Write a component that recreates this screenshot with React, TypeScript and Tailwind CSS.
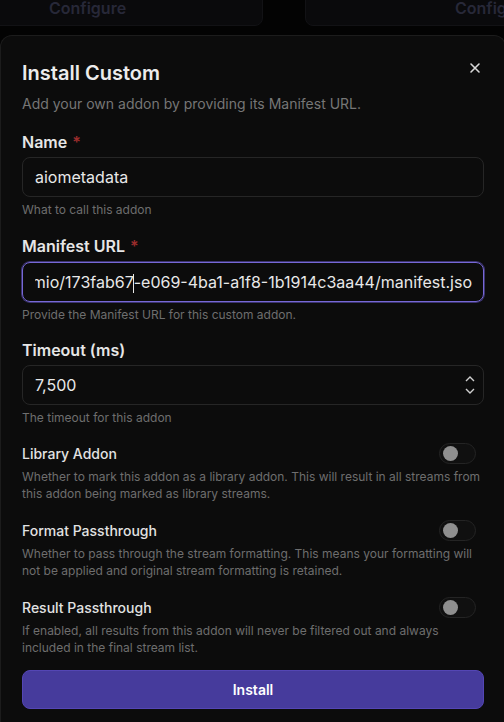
import React from 'react';

const Toggle = () => (
  <div className="w-[37px] h-[21px] rounded-full border border-[#242424] bg-[#101010] flex items-center px-[3px] shrink-0">
    <div className="w-[15px] h-[15px] rounded-full bg-[#8f8f8f]" />
  </div>
);

const SwitchRow = ({ title, desc, mt }: { title: string; desc: string; mt: string }) => (
  <div className={mt}>
    <div className="flex items-center justify-between pr-[8px]">
      <span className="text-[14px] leading-[20px] font-medium text-[#e2e2e2]">{title}</span>
      <Toggle />
    </div>
    <p className="mt-[4px] text-[12px] leading-[17px] text-[#6e6e6e]">{desc}</p>
  </div>
);

const Label = ({ text, required }: { text: string; required?: boolean }) => (
  <div className="text-[16px] leading-[24px] font-semibold text-[#e6e6e6]">
    {text}
    {required && <span className="ml-[5px] text-[#9b2c2c]">*</span>}
  </div>
);

const App: React.FC = () => {
  return (
    <div className="w-[504px] h-[722px] overflow-hidden bg-[#030303] font-['Inter',sans-serif]">
      {/* cards behind the dialog */}
      <div className="h-[35px] overflow-hidden flex gap-[42px]">
        <div className="ml-[-8px] mt-[-20px] w-[271px] h-[46px] shrink-0 rounded-lg bg-[#0a0a0c] border border-[#121215] flex items-end justify-start pl-[56px] pb-[9px]">
          <span className="text-[16px] leading-[16px] font-semibold text-[#272838]">Configure</span>
        </div>
        <div className="mt-[-20px] w-[230px] h-[46px] shrink-0 rounded-lg bg-[#0a0a0c] border border-[#121215] flex items-end pl-[149px] pb-[9px]">
          <span className="text-[16px] leading-[16px] font-semibold text-[#272838] whitespace-nowrap">Configure</span>
        </div>
      </div>

      {/* dialog */}
      <div className="relative w-[506px] h-[700px] rounded-t-xl border-t border-x border-[#1c1c1c] bg-[#0c0c0c] px-[21px] pt-[23px]">
        <button className="absolute right-[24px] top-[26px] text-[#d8d8d8]">
          <svg width="12" height="12" viewBox="0 0 12 12" fill="none" stroke="currentColor" strokeWidth="1.6" strokeLinecap="round">
            <path d="M2 2l8 8M10 2l-8 8" />
          </svg>
        </button>
        <h2 className="text-[20px] leading-[28px] font-semibold text-[#ececec]">Install Custom</h2>
        <p className="mt-[7px] text-[14px] leading-[20px] text-[#767676]">Add your own addon by providing its Manifest URL.</p>

        <div className="mt-[16px]">
          <Label text="Name" required />
          <div className="mt-[3px] h-[40px] rounded-lg border border-[#262626] flex items-center px-[12px] text-[16px] text-[#e8e8e8]">
            aiometadata
          </div>
          <p className="mt-[5px] text-[12px] leading-[16px] text-[#6e6e6e]">What to call this addon</p>
        </div>

        <div className="mt-[16px]">
          <Label text="Manifest URL" required />
          <div className="mt-[4px] h-[40px] rounded-lg border border-[#7768d6] shadow-[0_0_0_1px_#3c3470] flex items-center pl-[12px] pr-[11px] text-[16px] text-[#e8e8e8]">
            <div className="flex-1 overflow-hidden flex justify-end whitespace-nowrap">
              <span>
                elfhosted.com/stremio/173fab67
                <span className="inline-block w-px h-[19px] bg-[#e8e8e8] align-middle mx-[-0.5px]" />
                -e069-4ba1-a1f8-1b1914c3aa44/manifest.jso
              </span>
            </div>
          </div>
          <p className="mt-[5px] text-[12px] leading-[16px] text-[#6e6e6e]">Provide the Manifest URL for this custom addon.</p>
        </div>

        <div className="mt-[15px]">
          <Label text="Timeout (ms)" />
          <div className="mt-[3px] h-[40px] rounded-lg border border-[#262626] flex items-center pl-[12px] pr-[8px] text-[16px] text-[#e8e8e8]">
            <span className="flex-1">7,500</span>
            <div className="flex flex-col items-center gap-[6px] text-[#cfcfcf]">
              <svg width="10" height="6" viewBox="0 0 10 6" fill="none" stroke="currentColor" strokeWidth="1.4">
                <path d="M1 5l4-4 4 4" />
              </svg>
              <svg width="10" height="6" viewBox="0 0 10 6" fill="none" stroke="currentColor" strokeWidth="1.4">
                <path d="M1 1l4 4 4-4" />
              </svg>
            </div>
          </div>
          <p className="mt-[5px] text-[12px] leading-[16px] text-[#6e6e6e]">The timeout for this addon</p>
        </div>

        <SwitchRow
          mt="mt-[17px]"
          title="Library Addon"
          desc="Whether to mark this addon as a library addon. This will result in all streams from this addon being marked as library streams."
        />
        <SwitchRow
          mt="mt-[18px]"
          title="Format Passthrough"
          desc="Whether to pass through the stream formatting. This means your formatting will not be applied and original stream formatting is retained."
        />
        <SwitchRow
          mt="mt-[18px]"
          title="Result Passthrough"
          desc="If enabled, all results from this addon will never be filtered out and always included in the final stream list."
        />

        <button className="mt-[14px] w-full h-[39px] rounded-lg bg-[#463b9c] border border-[#5446b4] text-[14px] font-semibold text-white">
          Install
        </button>
      </div>
    </div>
  );
};

export default App;
